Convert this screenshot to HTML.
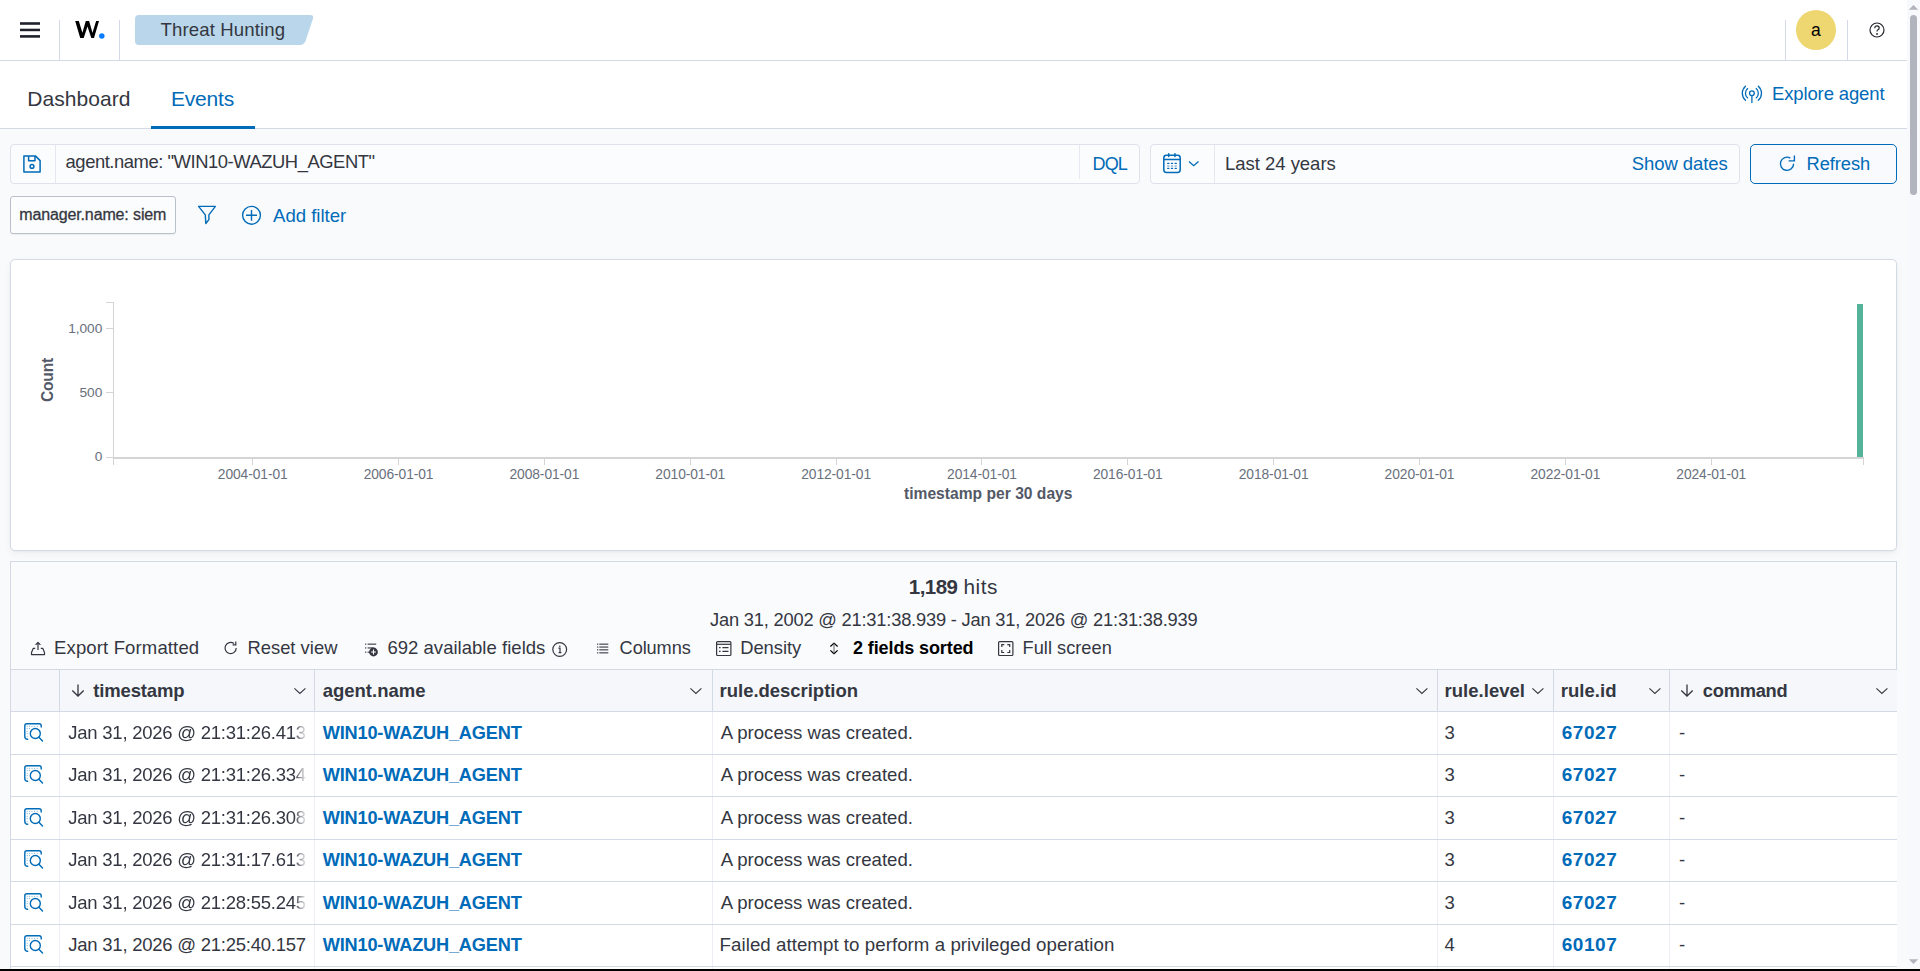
<!DOCTYPE html>
<html><head><meta charset="utf-8"><style>
html,body{margin:0;padding:0;width:1920px;height:971px;overflow:hidden;background:#fff}
body{position:relative;font-family:"Liberation Sans", sans-serif}
div{position:absolute}
.t{white-space:pre}
</style></head><body>
<div style="left:0px;top:0px;width:1907px;height:60px;background:#fff"></div>
<div style="left:0px;top:60px;width:1907px;height:1px;background:#D3DAE6"></div>
<svg style="position:absolute;left:18px;top:18px;" width="24" height="24" viewBox="0 0 24 24"><g fill="#1F222A"><rect x="2" y="4.2" width="20" height="2.6"/><rect x="2" y="10.7" width="20" height="2.5"/><rect x="2" y="17.1" width="20" height="2.6"/></g></svg>
<div style="left:59px;top:20px;width:1px;height:40px;background:#D3DAE6"></div>
<div style="left:119px;top:20px;width:1px;height:40px;background:#D3DAE6"></div>
<svg style="position:absolute;left:70px;top:15px;" width="40" height="30" viewBox="0 0 40 30"><path d="M5.2 6 L8.8 6 L12.4 17.8 L15.8 6 L19.1 6 L22.5 17.8 L26.1 6 L29 6 L24 23 L21.3 23 L17.5 11.4 L13.7 23 L10.2 23 Z" fill="#000"/><circle cx="31.8" cy="20.9" r="2.75" fill="#0B7BFF"/></svg>
<svg style="position:absolute;left:135px;top:15px;" width="180" height="30" viewBox="0 0 180 30"><path d="M4 0 H175 Q179 0 178 3.5 L170.5 26 Q169 30 165 30 H4 Q0 30 0 26 V4 Q0 0 4 0 Z" fill="#B9D6EA"/></svg>
<div class="t" style="left:160.60px;top:10px;font-size:18.6px;line-height:40px;font-weight:400;color:#343741;letter-spacing:0.108px;">Threat Hunting</div>
<div style="left:1785px;top:20px;width:1px;height:40px;background:#D3DAE6"></div>
<div style="left:1847px;top:20px;width:1px;height:40px;background:#D3DAE6"></div>
<svg style="position:absolute;left:1796px;top:10px;" width="40" height="40" viewBox="0 0 40 40"><circle cx="20" cy="20" r="20" fill="#EED670"/></svg>
<div class="t" style="left:1810.90px;top:10px;font-size:17.5px;line-height:40px;font-weight:400;color:#000000;letter-spacing:-1.3px;">a</div>
<svg style="position:absolute;left:1868px;top:21px;" width="18" height="18" viewBox="0 0 18 18"><circle cx="9" cy="9" r="7" fill="none" stroke="#22252c" stroke-width="1.2"/><path d="M6.8 7.2 Q6.8 4.8 9 4.8 Q11.2 4.8 11.2 6.9 Q11.2 8.2 9.6 9 Q9 9.3 9 10.5" fill="none" stroke="#22252c" stroke-width="1.2"/><circle cx="9" cy="12.9" r="0.95" fill="#22252c"/></svg>
<div style="left:0px;top:61px;width:1907px;height:67px;background:#fff"></div>
<div style="left:0px;top:128px;width:1907px;height:1px;background:#D3DAE6"></div>
<div class="t" style="left:27.30px;top:79px;font-size:21.0px;line-height:40px;font-weight:400;color:#343741;letter-spacing:0.05px;">Dashboard</div>
<div class="t" style="left:171.00px;top:79px;font-size:21.0px;line-height:40px;font-weight:400;color:#006BB8;letter-spacing:-0.2px;">Events</div>
<div style="left:151px;top:126px;width:104px;height:3px;background:#006BB8"></div>
<svg style="position:absolute;left:1736px;top:82px;" width="32" height="24" viewBox="0 0 32 24"><g fill="none" stroke="#006BB8" stroke-width="1.3" stroke-linecap="round"><circle cx="15.9" cy="11.3" r="2.35"/><path d="M15.9 13.7 V20.6"/><path d="M9.5 4.2 A9.37 9.37 0 0 0 9.5 18.3"/><path d="M22.3 4.2 A9.37 9.37 0 0 1 22.3 18.3"/><path d="M11.6 6.6 A6.1 6.1 0 0 0 11.6 15.9"/><path d="M20.2 6.6 A6.1 6.1 0 0 1 20.2 15.9"/></g></svg>
<div class="t" style="left:1772.00px;top:74px;font-size:18.5px;line-height:40px;font-weight:400;color:#006BB8;letter-spacing:-0.133px;">Explore agent</div>
<div style="left:0px;top:129px;width:1907px;height:842px;background:#F9FAFC"></div>
<div style="left:10px;top:144px;width:1130px;height:40px;background:#FBFCFD;border:1px solid #DDE2EB;border-radius:4px;box-sizing:border-box"></div>
<div style="left:55px;top:145px;width:1px;height:38px;background:#E3E7EE"></div>
<svg style="position:absolute;left:22px;top:154px;" width="20" height="20" viewBox="0 0 20 20"><g fill="none" stroke="#006BB8" stroke-width="1.5" stroke-linejoin="round"><path d="M1.9 1.9 H13.4 L18.1 6.6 V18 H1.9 Z"/><path d="M6.6 1.9 V6.8 H13 V1.9"/><circle cx="10" cy="12.4" r="1.9"/></g></svg>
<div class="t" style="left:65.60px;top:142px;font-size:18.4px;line-height:40px;font-weight:400;color:#343741;letter-spacing:-0.453px;">agent.name: "WIN10-WAZUH_AGENT"</div>
<div style="left:1079px;top:145px;width:1px;height:34px;background:#E6E9F0"></div>
<div class="t" style="left:1092.60px;top:144px;font-size:18.0px;line-height:40px;font-weight:400;color:#006BB8;letter-spacing:-0.9px;">DQL</div>
<div style="left:1150px;top:144px;width:590px;height:40px;background:#FBFCFD;border:1px solid #DDE2EB;border-radius:4px;box-sizing:border-box"></div>
<div style="left:1214px;top:145px;width:1px;height:38px;background:#E3E7EE"></div>
<svg style="position:absolute;left:1160px;top:151px;" width="44" height="24" viewBox="0 0 44 24"><g fill="none" stroke="#006BB8" stroke-width="1.5"><rect x="3.8" y="4.3" width="16.4" height="17.1" rx="2.6"/><path d="M3.8 8.5 H20.2"/><path d="M8.7 2.8 V5.5 M15 2.8 V5.5" stroke-linecap="round"/><path d="M29 10.5 L33.7 14.7 L38.5 10.5" stroke-width="1.3"/></g><g fill="#006BB8"><rect x="7.2" y="11.8" width="2.2" height="1.2"/><rect x="10.9" y="11.8" width="2.2" height="1.2"/><rect x="14.6" y="11.8" width="2.2" height="1.2"/><rect x="7.2" y="14.4" width="2.2" height="1.2" opacity=".6"/><rect x="10.9" y="14.4" width="2.2" height="1.2" opacity=".6"/><rect x="14.6" y="14.4" width="2.2" height="1.2" opacity=".6"/><rect x="7.2" y="16.8" width="2.2" height="1.2"/><rect x="10.9" y="16.8" width="2.2" height="1.2"/><rect x="14.6" y="16.8" width="2.2" height="1.2"/></g></svg>
<div class="t" style="left:1225.00px;top:144px;font-size:18.5px;line-height:40px;font-weight:400;color:#343741;letter-spacing:-0.025px;">Last 24 years</div>
<div class="t" style="left:1631.80px;top:144px;font-size:18.5px;line-height:40px;font-weight:400;color:#006BB8;letter-spacing:-0.089px;">Show dates</div>
<div style="left:1750px;top:144px;width:147px;height:40px;background:#F9FAFD;border:1px solid #006BB8;border-radius:5px;box-sizing:border-box"></div>
<svg style="position:absolute;left:1777px;top:153px;" width="22" height="22" viewBox="0 0 22 22"><g fill="none" stroke="#006BB8" stroke-width="1.4"><path d="M16.6 10.75 A6.6 6.6 0 1 1 13.3 5.03"/><path d="M17.4 2.4 V7.9 H11.6"/></g></svg>
<div class="t" style="left:1806.50px;top:144px;font-size:18.3px;line-height:40px;font-weight:400;color:#006BB8;letter-spacing:-0.05px;">Refresh</div>
<div style="left:10px;top:196px;width:166px;height:38px;background:#FBFCFD;border:1px solid #B9C0CC;border-radius:3px;box-sizing:border-box;box-shadow:0 1px 1px rgba(0,0,0,.06)"></div>
<div class="t" style="left:19.20px;top:195px;font-size:16.0px;line-height:40px;font-weight:400;color:#343741;letter-spacing:-0.129px;-webkit-text-stroke:0.3px #343741;">manager.name: siem</div>
<svg style="position:absolute;left:196px;top:204px;" width="22" height="22" viewBox="0 0 22 22"><path d="M2.6 2.4 H19.4 L12.9 10.9 V15.6 L9.8 19.5 L9.3 10.9 Z" fill="none" stroke="#006BB8" stroke-width="1.4" stroke-linejoin="round"/></svg>
<svg style="position:absolute;left:240px;top:204px;" width="24" height="24" viewBox="0 0 24 24"><g fill="none" stroke="#006BB8" stroke-width="1.4"><circle cx="11.5" cy="11.3" r="8.9"/><path d="M6 11.3 H17 M11.5 5.9 V16.7"/></g></svg>
<div class="t" style="left:273.00px;top:196px;font-size:18.6px;line-height:40px;font-weight:400;color:#006BB8;letter-spacing:-0.011px;">Add filter</div>
<div style="left:10px;top:259px;width:1887px;height:292px;background:#fff;border:1px solid #D3DAE6;border-radius:5px;box-sizing:border-box;box-shadow:0 1px 2px rgba(0,0,0,.04),0 3px 9px rgba(0,0,0,.045)"></div>
<div style="left:113px;top:302px;width:1px;height:162px;background:#D4D4D4"></div>
<div style="left:106px;top:302px;width:7px;height:1px;background:#D4D4D4"></div>
<div style="left:106px;top:328px;width:7px;height:1px;background:#D4D4D4"></div>
<div style="left:106px;top:392px;width:7px;height:1px;background:#D4D4D4"></div>
<div style="left:106px;top:457px;width:7px;height:1px;background:#D4D4D4"></div>
<div style="left:113px;top:457px;width:1751px;height:2px;background:#D4D4D4"></div>
<div class="t" style="right:1817.74px;top:309px;font-size:13.7px;line-height:40px;letter-spacing:-0.038px;color:#69707D">1,000</div>
<div class="t" style="right:1817.74px;top:373px;font-size:13.7px;line-height:40px;letter-spacing:-0.038px;color:#69707D">500</div>
<div class="t" style="right:1817.74px;top:437px;font-size:13.7px;line-height:40px;letter-spacing:-0.038px;color:#69707D">0</div>
<div class="t" style="left:47.8px;top:380px;font-size:15.6px;line-height:15.6px;letter-spacing:-0.2px;font-weight:700;color:#535966;transform:translate(-50%,-50%) rotate(-90deg);">Count</div>
<div style="left:252px;top:459px;width:1px;height:6px;background:#D4D4D4"></div>
<div class="t" style="left:252.70px;top:455px;font-size:13.8px;line-height:40px;letter-spacing:-0.078px;color:#69707D;transform:translateX(-50%)">2004-01-01</div>
<div style="left:398px;top:459px;width:1px;height:6px;background:#D4D4D4"></div>
<div class="t" style="left:398.55px;top:455px;font-size:13.8px;line-height:40px;letter-spacing:-0.078px;color:#69707D;transform:translateX(-50%)">2006-01-01</div>
<div style="left:544px;top:459px;width:1px;height:6px;background:#D4D4D4"></div>
<div class="t" style="left:544.40px;top:455px;font-size:13.8px;line-height:40px;letter-spacing:-0.078px;color:#69707D;transform:translateX(-50%)">2008-01-01</div>
<div style="left:690px;top:459px;width:1px;height:6px;background:#D4D4D4"></div>
<div class="t" style="left:690.25px;top:455px;font-size:13.8px;line-height:40px;letter-spacing:-0.078px;color:#69707D;transform:translateX(-50%)">2010-01-01</div>
<div style="left:836px;top:459px;width:1px;height:6px;background:#D4D4D4"></div>
<div class="t" style="left:836.10px;top:455px;font-size:13.8px;line-height:40px;letter-spacing:-0.078px;color:#69707D;transform:translateX(-50%)">2012-01-01</div>
<div style="left:981px;top:459px;width:1px;height:6px;background:#D4D4D4"></div>
<div class="t" style="left:981.95px;top:455px;font-size:13.8px;line-height:40px;letter-spacing:-0.078px;color:#69707D;transform:translateX(-50%)">2014-01-01</div>
<div style="left:1127px;top:459px;width:1px;height:6px;background:#D4D4D4"></div>
<div class="t" style="left:1127.80px;top:455px;font-size:13.8px;line-height:40px;letter-spacing:-0.078px;color:#69707D;transform:translateX(-50%)">2016-01-01</div>
<div style="left:1273px;top:459px;width:1px;height:6px;background:#D4D4D4"></div>
<div class="t" style="left:1273.65px;top:455px;font-size:13.8px;line-height:40px;letter-spacing:-0.078px;color:#69707D;transform:translateX(-50%)">2018-01-01</div>
<div style="left:1419px;top:459px;width:1px;height:6px;background:#D4D4D4"></div>
<div class="t" style="left:1419.50px;top:455px;font-size:13.8px;line-height:40px;letter-spacing:-0.078px;color:#69707D;transform:translateX(-50%)">2020-01-01</div>
<div style="left:1565px;top:459px;width:1px;height:6px;background:#D4D4D4"></div>
<div class="t" style="left:1565.35px;top:455px;font-size:13.8px;line-height:40px;letter-spacing:-0.078px;color:#69707D;transform:translateX(-50%)">2022-01-01</div>
<div style="left:1711px;top:459px;width:1px;height:6px;background:#D4D4D4"></div>
<div class="t" style="left:1711.20px;top:455px;font-size:13.8px;line-height:40px;letter-spacing:-0.078px;color:#69707D;transform:translateX(-50%)">2024-01-01</div>
<div style="left:113px;top:459px;width:1px;height:6px;background:#D4D4D4"></div>
<div style="left:1863px;top:459px;width:1px;height:6px;background:#D4D4D4"></div>
<div style="left:1857px;top:304px;width:6px;height:153px;background:#54B399"></div>
<div class="t" style="left:904.00px;top:474px;font-size:15.6px;line-height:40px;font-weight:700;color:#535966;letter-spacing:0.015px;">timestamp per 30 days</div>
<div style="left:10px;top:561px;width:1887px;height:420px;background:#FAFBFD;border:1px solid #D3DAE6;border-right:none;box-sizing:border-box"></div>
<div style="left:1896px;top:561px;width:1px;height:108px;background:#D3DAE6"></div>
<div class="t" style="left:908.80px;top:567px;font-size:20.5px;line-height:40px;font-weight:700;color:#343741;letter-spacing:-0.55px;">1,189</div>
<div class="t" style="left:963.40px;top:567px;font-size:20.8px;line-height:40px;font-weight:400;color:#343741;letter-spacing:0.533px;">hits</div>
<div class="t" style="left:710.00px;top:600px;font-size:18.3px;line-height:40px;font-weight:400;color:#343741;letter-spacing:-0.195px;">Jan 31, 2002 @ 21:31:38.939 - Jan 31, 2026 @ 21:31:38.939</div>
<svg style="position:absolute;left:28px;top:639px;" width="20" height="20" viewBox="0 0 20 20"><g fill="none" stroke="#343741" stroke-width="1.2" stroke-linejoin="round"><path d="M7.2 9.3 H5.3 L3.5 13.5 V15.6 H16.5 V13.5 L14.7 9.3 H12.8"/><path d="M10 3.5 V11 M7.6 5.9 L10 3.5 L12.4 5.9"/></g></svg>
<div class="t" style="left:54.00px;top:628px;font-size:18.5px;line-height:40px;font-weight:400;color:#343741;letter-spacing:0.147px;">Export Formatted</div>
<svg style="position:absolute;left:222px;top:639px;" width="18" height="18" viewBox="0 0 18 18"><g fill="none" stroke="#343741" stroke-width="1.2"><path d="M14.2 9 A5.6 5.6 0 1 1 12 4.6"/><path d="M13.8 2.5 V5.8 H10.6"/></g></svg>
<div class="t" style="left:247.40px;top:628px;font-size:18.4px;line-height:40px;font-weight:400;color:#343741;letter-spacing:0.011px;">Reset view</div>
<svg style="position:absolute;left:363px;top:640px;" width="20" height="20" viewBox="0 0 20 20"><g fill="#343741"><rect x="2" y="3.6" width="1.3" height="1.1"/><rect x="4.6" y="3.6" width="8.6" height="1.1"/><rect x="2" y="7.4" width="1.3" height="1.1"/><rect x="4.6" y="7.4" width="6" height="1.1"/><rect x="2" y="11.6" width="1.3" height="1.1"/><rect x="4.6" y="11.6" width="3.6" height="1.1"/><circle cx="10.5" cy="12" r="4.4"/></g><path d="M10.5 9.6 V14.4 M8.1 12 H12.9" stroke="#fff" stroke-width="1.1"/></svg>
<div class="t" style="left:387.40px;top:628px;font-size:18.5px;line-height:40px;font-weight:400;color:#343741;letter-spacing:0.032px;">692 available fields</div>
<svg style="position:absolute;left:550px;top:640px;" width="20" height="20" viewBox="0 0 20 20"><g fill="none" stroke="#343741" stroke-width="1.2"><circle cx="9.7" cy="9.5" r="6.9"/></g><path d="M8.4 8.1 H10 V12.6 M8.6 12.6 H11.4" fill="none" stroke="#343741" stroke-width="1.2"/><circle cx="9.8" cy="6.2" r="0.8" fill="#343741"/></svg>
<svg style="position:absolute;left:594px;top:640px;" width="18" height="18" viewBox="0 0 18 18"><g fill="#343741"><rect x="3" y="3.6" width="1.3" height="1.1"/><rect x="5.3" y="3.6" width="9" height="1.1"/><rect x="3" y="6.5" width="1.3" height="1.1"/><rect x="5.3" y="6.5" width="9" height="1.1"/><rect x="3" y="9.3" width="1.3" height="1.1"/><rect x="5.3" y="9.3" width="9" height="1.1"/><rect x="3" y="12.3" width="1.3" height="1.1"/><rect x="5.3" y="12.3" width="9" height="1.1"/></g></svg>
<div class="t" style="left:619.60px;top:628px;font-size:18.2px;line-height:40px;font-weight:400;color:#343741;letter-spacing:-0.1px;">Columns</div>
<svg style="position:absolute;left:714px;top:639px;" width="20" height="20" viewBox="0 0 20 20"><g fill="none" stroke="#343741" stroke-width="1.2"><rect x="2.6" y="2.6" width="14.3" height="13.9" rx="1"/><path d="M2.6 5.3 H16.9"/><path d="M5 8.7 H6.6 M8.4 8.7 H14.5 M5 12.3 H6.6 M8.4 12.3 H14.5"/></g></svg>
<div class="t" style="left:740.20px;top:628px;font-size:18.4px;line-height:40px;font-weight:400;color:#343741;letter-spacing:-0.05px;">Density</div>
<svg style="position:absolute;left:826px;top:640px;" width="16" height="18" viewBox="0 0 16 18"><g fill="none" stroke="#000" stroke-width="1.25" stroke-linejoin="round"><path d="M4.4 6.5 L8 3.1 L11.6 6.5 M4.4 10.4 L8 13.7 L11.6 10.4"/><path d="M8 3.4 V13.4" stroke="#666" stroke-width="1"/></g></svg>
<div class="t" style="left:853.00px;top:628px;font-size:18.0px;line-height:40px;font-weight:700;color:#000000;letter-spacing:-0.107px;">2 fields sorted</div>
<svg style="position:absolute;left:996px;top:639px;" width="20" height="20" viewBox="0 0 20 20"><g fill="none" stroke="#343741" stroke-width="1.2"><rect x="2.6" y="2.6" width="14.3" height="13.9" rx="1"/><path d="M5.8 8 V5.6 H8.2 M11.3 5.6 H13.7 V8 M13.7 11.1 V13.5 H11.3 M8.2 13.5 H5.8 V11.1"/></g></svg>
<div class="t" style="left:1022.60px;top:628px;font-size:18.2px;line-height:40px;font-weight:400;color:#343741;letter-spacing:0.02px;">Full screen</div>
<div style="left:10px;top:669px;width:1887px;height:43px;background:#F5F7FA"></div>
<div style="left:10px;top:669px;width:1887px;height:1px;background:#D3DAE6"></div>
<div style="left:10px;top:711px;width:1887px;height:1px;background:#D3DAE6"></div>
<div style="left:11px;top:712px;width:1886px;height:260px;background:#fff"></div>
<div style="left:59px;top:670px;width:1px;height:41px;background:#D3DAE6"></div>
<div style="left:59px;top:712px;width:1px;height:259px;background:#EBEEF4"></div>
<div style="left:314px;top:670px;width:1px;height:41px;background:#D3DAE6"></div>
<div style="left:314px;top:712px;width:1px;height:259px;background:#EBEEF4"></div>
<div style="left:712px;top:670px;width:1px;height:41px;background:#D3DAE6"></div>
<div style="left:712px;top:712px;width:1px;height:259px;background:#EBEEF4"></div>
<div style="left:1437px;top:670px;width:1px;height:41px;background:#D3DAE6"></div>
<div style="left:1437px;top:712px;width:1px;height:259px;background:#EBEEF4"></div>
<div style="left:1553px;top:670px;width:1px;height:41px;background:#D3DAE6"></div>
<div style="left:1553px;top:712px;width:1px;height:259px;background:#EBEEF4"></div>
<div style="left:1669px;top:670px;width:1px;height:41px;background:#D3DAE6"></div>
<div style="left:1669px;top:712px;width:1px;height:259px;background:#EBEEF4"></div>
<div style="left:10px;top:669px;width:1px;height:302px;background:#D3DAE6"></div>
<svg style="position:absolute;left:70.5px;top:684px;" width="16" height="14" viewBox="0 0 16 14"><g fill="none" stroke="#343741" stroke-width="1.3"><path d="M7 0.5 V12 M1.3 6.5 L7 12 L12.7 6.5"/></g></svg>
<div class="t" style="left:93.20px;top:671px;font-size:18.5px;line-height:40px;font-weight:700;color:#343741;letter-spacing:-0.15px;">timestamp</div>
<svg style="position:absolute;left:293px;top:686.5px;" width="14" height="9" viewBox="0 0 14 9"><path d="M1.4 1.4 L6.9 6.5 L12.4 1.4" fill="none" stroke="#343741" stroke-width="1.1"/></svg>
<div class="t" style="left:322.70px;top:671px;font-size:18.5px;line-height:40px;font-weight:700;color:#343741;letter-spacing:0px;">agent.name</div>
<svg style="position:absolute;left:689px;top:686.5px;" width="14" height="9" viewBox="0 0 14 9"><path d="M1.4 1.4 L6.9 6.5 L12.4 1.4" fill="none" stroke="#343741" stroke-width="1.1"/></svg>
<div class="t" style="left:719.60px;top:671px;font-size:18.5px;line-height:40px;font-weight:700;color:#343741;letter-spacing:-0.027px;">rule.description</div>
<svg style="position:absolute;left:1415px;top:686.5px;" width="14" height="9" viewBox="0 0 14 9"><path d="M1.4 1.4 L6.9 6.5 L12.4 1.4" fill="none" stroke="#343741" stroke-width="1.1"/></svg>
<div class="t" style="left:1444.50px;top:671px;font-size:18.5px;line-height:40px;font-weight:700;color:#343741;letter-spacing:0.033px;">rule.level</div>
<svg style="position:absolute;left:1531px;top:686.5px;" width="14" height="9" viewBox="0 0 14 9"><path d="M1.4 1.4 L6.9 6.5 L12.4 1.4" fill="none" stroke="#343741" stroke-width="1.1"/></svg>
<div class="t" style="left:1560.70px;top:671px;font-size:18.5px;line-height:40px;font-weight:700;color:#343741;letter-spacing:0.05px;">rule.id</div>
<svg style="position:absolute;left:1648px;top:686.5px;" width="14" height="9" viewBox="0 0 14 9"><path d="M1.4 1.4 L6.9 6.5 L12.4 1.4" fill="none" stroke="#343741" stroke-width="1.1"/></svg>
<svg style="position:absolute;left:1680px;top:684px;" width="16" height="14" viewBox="0 0 16 14"><g fill="none" stroke="#343741" stroke-width="1.3"><path d="M7 0.5 V12 M1.3 6.5 L7 12 L12.7 6.5"/></g></svg>
<div class="t" style="left:1702.80px;top:671px;font-size:18.3px;line-height:40px;font-weight:700;color:#343741;letter-spacing:-0.25px;">command</div>
<svg style="position:absolute;left:1875px;top:686.5px;" width="14" height="9" viewBox="0 0 14 9"><path d="M1.4 1.4 L6.9 6.5 L12.4 1.4" fill="none" stroke="#343741" stroke-width="1.1"/></svg>
<div style="left:10px;top:754px;width:1887px;height:1px;background:#D3DAE6"></div>
<svg style="position:absolute;left:22px;top:722px;" width="22" height="22" viewBox="0 0 22 22"><g fill="none" stroke="#006BB8" stroke-width="1.4" stroke-linecap="round"><path d="M5.7 17.3 Q2.8 17.3 2.8 14.4 V3.9 Q2.8 1.8 4.9 1.8 H17.1 Q19.2 1.8 19.2 3.9 V5"/><circle cx="13.3" cy="11.5" r="5"/><path d="M16.9 15.2 L20.5 19"/></g><g fill="#006BB8" opacity=".55"><circle cx="5.2" cy="4.3" r=".55"/><circle cx="7.5" cy="4.3" r=".55"/><circle cx="10" cy="4.3" r=".55"/><circle cx="12.5" cy="4.3" r=".55"/><circle cx="15.2" cy="4.3" r=".55"/><circle cx="5.2" cy="6.6" r=".55"/><circle cx="7.5" cy="6.6" r=".55"/><circle cx="5.2" cy="9.3" r=".55"/><circle cx="5.2" cy="11.5" r=".55"/><circle cx="5.2" cy="14.3" r=".55"/></g></svg>
<div class="t" style="left:68.30px;top:713px;font-size:18.5px;line-height:40px;font-weight:400;color:#343741;letter-spacing:-0.242px;width:240px;overflow:hidden;-webkit-mask-image:linear-gradient(90deg,#000 226px,transparent 239px);">Jan 31, 2026 @ 21:31:26.413</div>
<div class="t" style="left:322.70px;top:713px;font-size:18.2px;line-height:40px;font-weight:700;color:#006BB8;letter-spacing:-0.187px;">WIN10-WAZUH_AGENT</div>
<div class="t" style="left:720.70px;top:713px;font-size:18.6px;line-height:40px;font-weight:400;color:#343741;letter-spacing:0.0px;">A process was created.</div>
<div class="t" style="left:1444.50px;top:713px;font-size:18.5px;line-height:40px;font-weight:400;color:#343741;letter-spacing:0px;">3</div>
<div class="t" style="left:1561.70px;top:713px;font-size:19.0px;line-height:40px;font-weight:700;color:#006BB8;letter-spacing:0.575px;">67027</div>
<div class="t" style="left:1679.00px;top:713px;font-size:18.5px;line-height:40px;font-weight:400;color:#343741;letter-spacing:-0.5px;">-</div>
<div style="left:10px;top:796px;width:1887px;height:1px;background:#D3DAE6"></div>
<svg style="position:absolute;left:22px;top:764px;" width="22" height="22" viewBox="0 0 22 22"><g fill="none" stroke="#006BB8" stroke-width="1.4" stroke-linecap="round"><path d="M5.7 17.3 Q2.8 17.3 2.8 14.4 V3.9 Q2.8 1.8 4.9 1.8 H17.1 Q19.2 1.8 19.2 3.9 V5"/><circle cx="13.3" cy="11.5" r="5"/><path d="M16.9 15.2 L20.5 19"/></g><g fill="#006BB8" opacity=".55"><circle cx="5.2" cy="4.3" r=".55"/><circle cx="7.5" cy="4.3" r=".55"/><circle cx="10" cy="4.3" r=".55"/><circle cx="12.5" cy="4.3" r=".55"/><circle cx="15.2" cy="4.3" r=".55"/><circle cx="5.2" cy="6.6" r=".55"/><circle cx="7.5" cy="6.6" r=".55"/><circle cx="5.2" cy="9.3" r=".55"/><circle cx="5.2" cy="11.5" r=".55"/><circle cx="5.2" cy="14.3" r=".55"/></g></svg>
<div class="t" style="left:68.30px;top:755px;font-size:18.5px;line-height:40px;font-weight:400;color:#343741;letter-spacing:-0.242px;width:240px;overflow:hidden;-webkit-mask-image:linear-gradient(90deg,#000 226px,transparent 239px);">Jan 31, 2026 @ 21:31:26.334</div>
<div class="t" style="left:322.70px;top:755px;font-size:18.2px;line-height:40px;font-weight:700;color:#006BB8;letter-spacing:-0.187px;">WIN10-WAZUH_AGENT</div>
<div class="t" style="left:720.70px;top:755px;font-size:18.6px;line-height:40px;font-weight:400;color:#343741;letter-spacing:0.0px;">A process was created.</div>
<div class="t" style="left:1444.50px;top:755px;font-size:18.5px;line-height:40px;font-weight:400;color:#343741;letter-spacing:0px;">3</div>
<div class="t" style="left:1561.70px;top:755px;font-size:19.0px;line-height:40px;font-weight:700;color:#006BB8;letter-spacing:0.575px;">67027</div>
<div class="t" style="left:1679.00px;top:755px;font-size:18.5px;line-height:40px;font-weight:400;color:#343741;letter-spacing:-0.5px;">-</div>
<div style="left:10px;top:839px;width:1887px;height:1px;background:#D3DAE6"></div>
<svg style="position:absolute;left:22px;top:807px;" width="22" height="22" viewBox="0 0 22 22"><g fill="none" stroke="#006BB8" stroke-width="1.4" stroke-linecap="round"><path d="M5.7 17.3 Q2.8 17.3 2.8 14.4 V3.9 Q2.8 1.8 4.9 1.8 H17.1 Q19.2 1.8 19.2 3.9 V5"/><circle cx="13.3" cy="11.5" r="5"/><path d="M16.9 15.2 L20.5 19"/></g><g fill="#006BB8" opacity=".55"><circle cx="5.2" cy="4.3" r=".55"/><circle cx="7.5" cy="4.3" r=".55"/><circle cx="10" cy="4.3" r=".55"/><circle cx="12.5" cy="4.3" r=".55"/><circle cx="15.2" cy="4.3" r=".55"/><circle cx="5.2" cy="6.6" r=".55"/><circle cx="7.5" cy="6.6" r=".55"/><circle cx="5.2" cy="9.3" r=".55"/><circle cx="5.2" cy="11.5" r=".55"/><circle cx="5.2" cy="14.3" r=".55"/></g></svg>
<div class="t" style="left:68.30px;top:798px;font-size:18.5px;line-height:40px;font-weight:400;color:#343741;letter-spacing:-0.242px;width:240px;overflow:hidden;-webkit-mask-image:linear-gradient(90deg,#000 226px,transparent 239px);">Jan 31, 2026 @ 21:31:26.308</div>
<div class="t" style="left:322.70px;top:798px;font-size:18.2px;line-height:40px;font-weight:700;color:#006BB8;letter-spacing:-0.187px;">WIN10-WAZUH_AGENT</div>
<div class="t" style="left:720.70px;top:798px;font-size:18.6px;line-height:40px;font-weight:400;color:#343741;letter-spacing:0.0px;">A process was created.</div>
<div class="t" style="left:1444.50px;top:798px;font-size:18.5px;line-height:40px;font-weight:400;color:#343741;letter-spacing:0px;">3</div>
<div class="t" style="left:1561.70px;top:798px;font-size:19.0px;line-height:40px;font-weight:700;color:#006BB8;letter-spacing:0.575px;">67027</div>
<div class="t" style="left:1679.00px;top:798px;font-size:18.5px;line-height:40px;font-weight:400;color:#343741;letter-spacing:-0.5px;">-</div>
<div style="left:10px;top:881px;width:1887px;height:1px;background:#D3DAE6"></div>
<svg style="position:absolute;left:22px;top:849px;" width="22" height="22" viewBox="0 0 22 22"><g fill="none" stroke="#006BB8" stroke-width="1.4" stroke-linecap="round"><path d="M5.7 17.3 Q2.8 17.3 2.8 14.4 V3.9 Q2.8 1.8 4.9 1.8 H17.1 Q19.2 1.8 19.2 3.9 V5"/><circle cx="13.3" cy="11.5" r="5"/><path d="M16.9 15.2 L20.5 19"/></g><g fill="#006BB8" opacity=".55"><circle cx="5.2" cy="4.3" r=".55"/><circle cx="7.5" cy="4.3" r=".55"/><circle cx="10" cy="4.3" r=".55"/><circle cx="12.5" cy="4.3" r=".55"/><circle cx="15.2" cy="4.3" r=".55"/><circle cx="5.2" cy="6.6" r=".55"/><circle cx="7.5" cy="6.6" r=".55"/><circle cx="5.2" cy="9.3" r=".55"/><circle cx="5.2" cy="11.5" r=".55"/><circle cx="5.2" cy="14.3" r=".55"/></g></svg>
<div class="t" style="left:68.30px;top:840px;font-size:18.5px;line-height:40px;font-weight:400;color:#343741;letter-spacing:-0.242px;width:240px;overflow:hidden;-webkit-mask-image:linear-gradient(90deg,#000 226px,transparent 239px);">Jan 31, 2026 @ 21:31:17.613</div>
<div class="t" style="left:322.70px;top:840px;font-size:18.2px;line-height:40px;font-weight:700;color:#006BB8;letter-spacing:-0.187px;">WIN10-WAZUH_AGENT</div>
<div class="t" style="left:720.70px;top:840px;font-size:18.6px;line-height:40px;font-weight:400;color:#343741;letter-spacing:0.0px;">A process was created.</div>
<div class="t" style="left:1444.50px;top:840px;font-size:18.5px;line-height:40px;font-weight:400;color:#343741;letter-spacing:0px;">3</div>
<div class="t" style="left:1561.70px;top:840px;font-size:19.0px;line-height:40px;font-weight:700;color:#006BB8;letter-spacing:0.575px;">67027</div>
<div class="t" style="left:1679.00px;top:840px;font-size:18.5px;line-height:40px;font-weight:400;color:#343741;letter-spacing:-0.5px;">-</div>
<div style="left:10px;top:924px;width:1887px;height:1px;background:#D3DAE6"></div>
<svg style="position:absolute;left:22px;top:892px;" width="22" height="22" viewBox="0 0 22 22"><g fill="none" stroke="#006BB8" stroke-width="1.4" stroke-linecap="round"><path d="M5.7 17.3 Q2.8 17.3 2.8 14.4 V3.9 Q2.8 1.8 4.9 1.8 H17.1 Q19.2 1.8 19.2 3.9 V5"/><circle cx="13.3" cy="11.5" r="5"/><path d="M16.9 15.2 L20.5 19"/></g><g fill="#006BB8" opacity=".55"><circle cx="5.2" cy="4.3" r=".55"/><circle cx="7.5" cy="4.3" r=".55"/><circle cx="10" cy="4.3" r=".55"/><circle cx="12.5" cy="4.3" r=".55"/><circle cx="15.2" cy="4.3" r=".55"/><circle cx="5.2" cy="6.6" r=".55"/><circle cx="7.5" cy="6.6" r=".55"/><circle cx="5.2" cy="9.3" r=".55"/><circle cx="5.2" cy="11.5" r=".55"/><circle cx="5.2" cy="14.3" r=".55"/></g></svg>
<div class="t" style="left:68.30px;top:883px;font-size:18.5px;line-height:40px;font-weight:400;color:#343741;letter-spacing:-0.242px;width:240px;overflow:hidden;-webkit-mask-image:linear-gradient(90deg,#000 226px,transparent 239px);">Jan 31, 2026 @ 21:28:55.245</div>
<div class="t" style="left:322.70px;top:883px;font-size:18.2px;line-height:40px;font-weight:700;color:#006BB8;letter-spacing:-0.187px;">WIN10-WAZUH_AGENT</div>
<div class="t" style="left:720.70px;top:883px;font-size:18.6px;line-height:40px;font-weight:400;color:#343741;letter-spacing:0.0px;">A process was created.</div>
<div class="t" style="left:1444.50px;top:883px;font-size:18.5px;line-height:40px;font-weight:400;color:#343741;letter-spacing:0px;">3</div>
<div class="t" style="left:1561.70px;top:883px;font-size:19.0px;line-height:40px;font-weight:700;color:#006BB8;letter-spacing:0.575px;">67027</div>
<div class="t" style="left:1679.00px;top:883px;font-size:18.5px;line-height:40px;font-weight:400;color:#343741;letter-spacing:-0.5px;">-</div>
<div style="left:10px;top:966px;width:1887px;height:1px;background:#D3DAE6"></div>
<svg style="position:absolute;left:22px;top:934px;" width="22" height="22" viewBox="0 0 22 22"><g fill="none" stroke="#006BB8" stroke-width="1.4" stroke-linecap="round"><path d="M5.7 17.3 Q2.8 17.3 2.8 14.4 V3.9 Q2.8 1.8 4.9 1.8 H17.1 Q19.2 1.8 19.2 3.9 V5"/><circle cx="13.3" cy="11.5" r="5"/><path d="M16.9 15.2 L20.5 19"/></g><g fill="#006BB8" opacity=".55"><circle cx="5.2" cy="4.3" r=".55"/><circle cx="7.5" cy="4.3" r=".55"/><circle cx="10" cy="4.3" r=".55"/><circle cx="12.5" cy="4.3" r=".55"/><circle cx="15.2" cy="4.3" r=".55"/><circle cx="5.2" cy="6.6" r=".55"/><circle cx="7.5" cy="6.6" r=".55"/><circle cx="5.2" cy="9.3" r=".55"/><circle cx="5.2" cy="11.5" r=".55"/><circle cx="5.2" cy="14.3" r=".55"/></g></svg>
<div class="t" style="left:68.30px;top:925px;font-size:18.5px;line-height:40px;font-weight:400;color:#343741;letter-spacing:-0.242px;">Jan 31, 2026 @ 21:25:40.157</div>
<div class="t" style="left:322.70px;top:925px;font-size:18.2px;line-height:40px;font-weight:700;color:#006BB8;letter-spacing:-0.187px;">WIN10-WAZUH_AGENT</div>
<div class="t" style="left:719.60px;top:925px;font-size:18.7px;line-height:40px;font-weight:400;color:#343741;letter-spacing:0.045px;">Failed attempt to perform a privileged operation</div>
<div class="t" style="left:1444.50px;top:925px;font-size:18.5px;line-height:40px;font-weight:400;color:#343741;letter-spacing:0px;">4</div>
<div class="t" style="left:1561.70px;top:925px;font-size:19.0px;line-height:40px;font-weight:700;color:#006BB8;letter-spacing:0.575px;">60107</div>
<div class="t" style="left:1679.00px;top:925px;font-size:18.5px;line-height:40px;font-weight:400;color:#343741;letter-spacing:-0.5px;">-</div>
<div style="left:1907px;top:0px;width:13px;height:971px;background:#F8F9FC"></div>
<svg style="position:absolute;left:1907px;top:0px;" width="13" height="14" viewBox="0 0 13 14"><path d="M1.8 9.8 L6.5 5 L11.2 9.8 Z" fill="#B1B4BD"/></svg>
<div style="left:1910px;top:15px;width:7px;height:180px;background:#B1B4BD;border-radius:4px"></div>
<svg style="position:absolute;left:1907px;top:955px;" width="13" height="14" viewBox="0 0 13 14"><path d="M1.8 4.2 L6.5 9 L11.2 4.2 Z" fill="#B1B4BD"/></svg>
<div style="left:0px;top:969px;width:1920px;height:2px;background:#000"></div>
</body></html>
